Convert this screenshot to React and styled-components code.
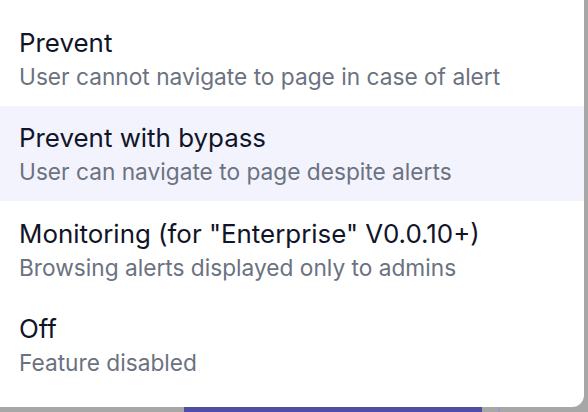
import styled, { createGlobalStyle } from "styled-components";

const GlobalStyle = createGlobalStyle`
  html, body {
    margin: 0;
    padding: 0;
    background: #a7a7a7;
  }
  body {
    font-family: Inter, "Noto Sans", sans-serif;
  }
`

const Backdrop = styled.div`
  width: 588px;
  height: 412px;
  overflow: hidden;
  display: grid;
  grid-template-columns: 584px 4px;
  grid-template-rows: 407px 5px;
  background: #a7a7a7;
`

const Menu = styled.ul`
  list-style: none;
  margin: 0;
  padding: 10px 0 14px;
  background: #ffffff;
  border-radius: 0 0 12px 0;
  display: flex;
  flex-direction: column;
`

const Option = styled.li`
  height: 95.5px;
  box-sizing: border-box;
  padding: 14.5px 19px 0;
  background: ${(p) => (p.$active ? "#f3f3fd" : "transparent")};
  cursor: pointer;
`

const Title = styled.div`
  font-size: 25.9px;
  line-height: 36px;
  color: #101528;
  white-space: nowrap;
`

const Hint = styled.div`
  font-size: 22.7px;
  line-height: 32px;
  color: #6b7280;
  white-space: nowrap;
`

const BottomBar = styled.div`
  grid-column: 1 / 3;
  display: flex;
  padding-left: 184px;
  gap: 16px;
`

const SubmitButton = styled.div`
  width: 298px;
  height: 100%;
  background: #4e4ea6;
`

const Divider = styled.div`
  width: 2px;
  height: 100%;
  background: #9b9bc8;
`

const options = [
  { title: "Prevent", hint: "User cannot navigate to page in case of alert" },
  { title: "Prevent with bypass", hint: "User can navigate to page despite alerts", active: true },
  { title: 'Monitoring (for "Enterprise" V0.0.10+)', hint: "Browsing alerts displayed only to admins" },
  { title: "Off", hint: "Feature disabled" },
];

const App = () => {
  return (
    <>
      <GlobalStyle />
      <Backdrop>
        <Menu>
          {options.map((o) => (
            <Option key={o.title} $active={o.active}>
              <Title>{o.title}</Title>
              <Hint>{o.hint}</Hint>
            </Option>
          ))}
        </Menu>
        <div />
        <BottomBar>
          <SubmitButton />
          <Divider />
        </BottomBar>
      </Backdrop>
    </>
  )
}
export default App;
